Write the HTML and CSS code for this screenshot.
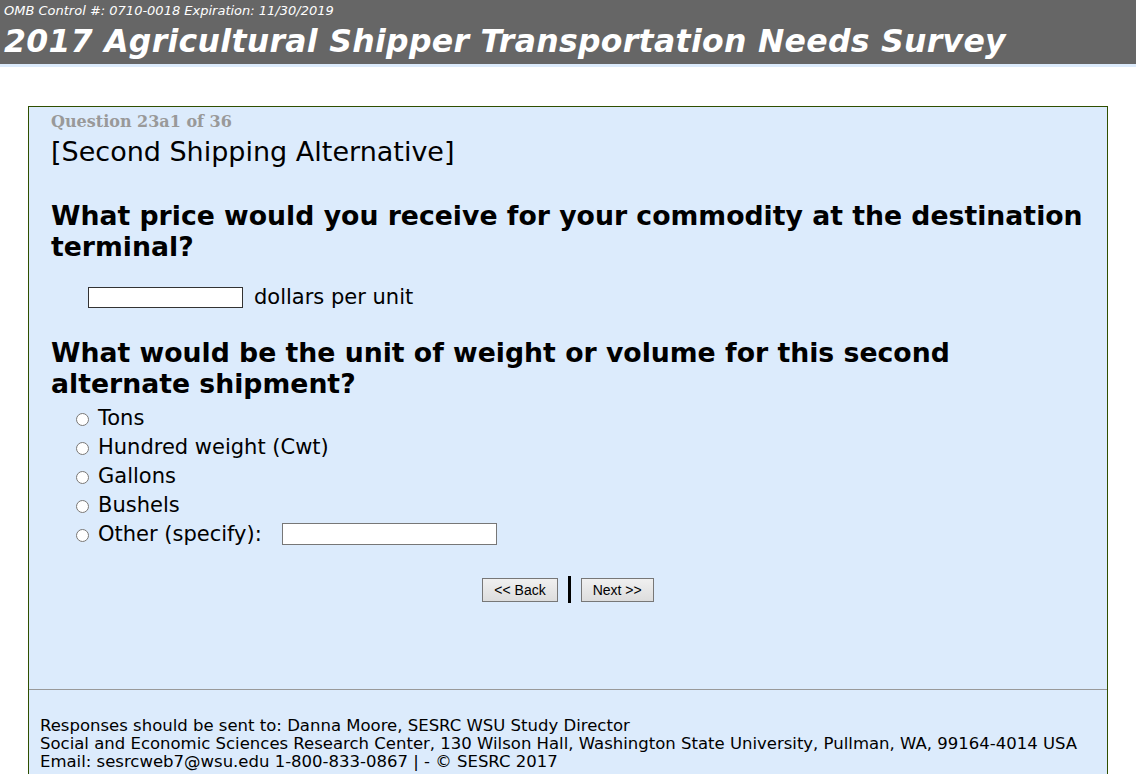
FILE: index.html
```html
<!DOCTYPE html>
<html lang="en">
<head>
    <meta charset="UTF-8">
    <title>2017 Agricultural Shipper Transportation Needs Survey</title>
    <link rel="stylesheet" href="styles.css">
</head>
<body>
    <div class="header">
        <div class="omb">OMB Control #: 0710-0018 Expiration: 11/30/2019</div>
        <h1>2017 Agricultural Shipper Transportation Needs Survey</h1>
    </div>
    <div class="header-strip"></div>

    <div class="survey">
        <div class="content">
            <div class="qnum">Question 23a1 of 36</div>
            <div class="section">[Second Shipping Alternative]</div>

            <h2>What price would you receive for your commodity at the destination terminal?</h2>
            <div class="price-row">
                <input type="text" class="price-input">
                <span>dollars per unit</span>
            </div>

            <h2 class="q2">What would be the unit of weight or volume for this second alternate shipment?</h2>
            <div class="options">
                <label class="option"><input type="radio" name="unit"> Tons</label>
                <label class="option"><input type="radio" name="unit"> Hundred weight (Cwt)</label>
                <label class="option"><input type="radio" name="unit"> Gallons</label>
                <label class="option"><input type="radio" name="unit"> Bushels</label>
                <label class="option"><input type="radio" name="unit"> Other (specify): <input type="text" class="other-input"></label>
            </div>

            <div class="nav">
                <button>&lt;&lt; Back</button>
                <span class="divider"></span>
                <button>Next &gt;&gt;</button>
            </div>
        </div>
        <div class="footer">
            Responses should be sent to: Danna Moore, SESRC WSU Study Director<br>
            Social and Economic Sciences Research Center, 130 Wilson Hall, Washington State University, Pullman, WA, 99164-4014 USA<br>
            Email: sesrcweb7@wsu.edu 1-800-833-0867 | - &copy; SESRC 2017
        </div>
    </div>
</body>
</html>
```

FILE: styles.css
```css
body { margin: 0; font-family: "DejaVu Sans", Verdana, sans-serif; color: #000; background: #fff; overflow: hidden; }
.header { background: #666666; color: #fff; padding: 3px 4px 4px; height: 57px; margin-right: 2px; }
.omb { font-size: 13px; font-style: italic; line-height: 15px; }
h1 { margin: 5px 0 0; font-size: 31.5px; font-style: italic; font-weight: bold; line-height: 36px; letter-spacing: 0.3px; }
.header-strip { height: 3px; background: #dcebfc; margin-right: 2px; }
.survey { margin: 39px 30px 0 28px; border: 1px solid #2f4f00; background: #dcebfc; height: 700px; }
.content { padding: 5px 22px 0; height: 577px; border-bottom: 1px solid #999; }
.qnum { font-family: "DejaVu Serif", Georgia, serif; font-weight: bold; font-size: 16px; color: #999; line-height: 20px; }
.section { font-size: 27px; line-height: 32px; margin-top: 4px; }
h2 { font-size: 26.7px; font-weight: bold; line-height: 31px; margin: 32px 0 0; }
.price-row { display: flex; align-items: center; gap: 11px; margin: 23px 0 0 37px; font-size: 21px; }
.price-input { width: 151px; height: 17px; border: 1px solid #333; padding: 1px; margin: 0; background: #fff; }
h2.q2 { margin-top: 28px; }
.options { margin: 4px 0 0 25px; font-size: 21px; }
.option { display: flex; align-items: center; height: 29px; }
.option input[type=radio] { width: 13px; height: 13px; margin: 4px 9px 0 0; }
.other-input { width: 211px; height: 18px; border: 1px solid #777; padding: 1px; margin: 0 0 0 20px; background: #fff; }
.nav { display: flex; justify-content: center; align-items: center; gap: 10px; margin-top: 28px; }
.nav button { font-family: "Liberation Sans", Arial, sans-serif; font-size: 14px; padding: 2px 11px; height: 24px; border: 1px solid #777; background: linear-gradient(#f0f0f0, #dddddd); color: #000; }
.divider { width: 3px; height: 27px; background: #000; }
.footer { padding: 27px 11px 0; font-size: 16.5px; line-height: 18px; }
```
